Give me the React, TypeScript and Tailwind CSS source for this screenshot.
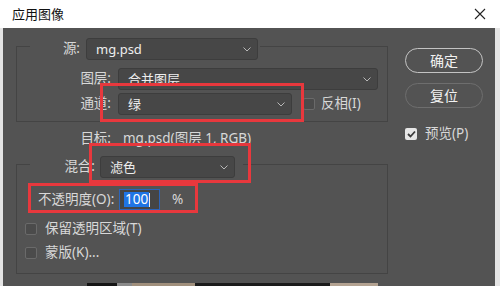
import React from 'react';

const font = "font-['Noto_Sans','Noto_Sans_CJK_SC',sans-serif]";

const Chevron: React.FC = () => (
  <svg width="8" height="5" viewBox="0 0 8 5" className="shrink-0">
    <polyline points="0.5,0.5 4,4 7.5,0.5" fill="none" stroke="#b8b8b8" strokeWidth="1" />
  </svg>
);

// dropdown box, width class passed in full
const Select: React.FC<{ value: string; className: string }> = ({ value, className }) => (
  <div
    className={`flex items-center justify-between h-[22px] pl-[9px] pr-[6px] bg-[#474747] border border-[#3d3d3d] rounded-[3px] text-[13px] leading-none text-[#eeeeee] ${className}`}
  >
    <span>{value}</span>
    <Chevron />
  </div>
);

const Box: React.FC<{ checked?: boolean }> = ({ checked }) =>
  checked ? (
    <div className="w-[12px] h-[12px] rounded-[2px] bg-[#e6e6e6] flex items-center justify-center shrink-0">
      <svg width="9" height="8" viewBox="0 0 9 8">
        <polyline points="1,4 3.5,6.5 8,1.5" fill="none" stroke="#3a3a3a" strokeWidth="1.8" />
      </svg>
    </div>
  ) : (
    <div className="w-[12px] h-[12px] rounded-[2px] bg-[#4b4b4b] border border-[#6a6a6a] shrink-0" />
  );

const App: React.FC = () => {
  return (
    <div className={`relative w-[500px] h-[286px] overflow-hidden bg-[#e4e4e4] ${font}`}>
      {/* title bar */}
      <div className="h-[28px] bg-white flex items-center justify-between pl-[12px] pr-[14px]">
        <span className="text-[13px] leading-none text-[#111]">应用图像</span>
        <svg width="12" height="12" viewBox="0 0 12 12">
          <path d="M1 1 L11 11 M11 1 L1 11" stroke="#222" strokeWidth="1.1" />
        </svg>
      </div>

      {/* dialog body */}
      <div className="flex h-[255px] ml-[3px] mr-[5px] bg-[#535353] text-[13.5px] leading-none text-[#d8d8d8]">
        {/* left column */}
        <div className="flex flex-col ml-[13px] w-[372px] pt-[4px]">
          <fieldset className="border border-[#444444] pb-[6px]">
            <legend className="ml-[13px] pt-[6px] pr-[2px]">
              <div className="flex items-center">
                <span className="w-[50px] text-right">源:</span>
                <Select value="mg.psd" className="ml-[6px] w-[172px]" />
              </div>
            </legend>
            <div className="flex flex-col gap-[3px] pt-[8px]">
              <div className="flex items-center">
                <span className="w-[94px] text-right">图层:</span>
                <Select value="合并图层" className="ml-[7px] w-[260px]" />
              </div>
              <div className="flex items-center">
                <span className="w-[94px] text-right">通道:</span>
                <Select value="绿" className="ml-[7px] w-[174px]" />
                <div className="ml-[11px]">
                  <Box />
                </div>
                <span className="ml-[6px]">反相(I)</span>
              </div>
            </div>
          </fieldset>

          <div className="flex items-center h-[20px] mt-[7px]">
            <span className="w-[95px] text-right">目标:</span>
            <span className="ml-[12px]">mg.psd(图层 1, RGB)</span>
          </div>

          <fieldset className="mt-[1px] border border-[#444444] pb-[11px]">
            <legend className="ml-[13px] pt-[6px] pr-[8px]">
              <div className="flex items-center">
                <span className="w-[65px] text-right">混合:</span>
                <Select value="滤色" className="ml-[5px] w-[135px]" />
              </div>
            </legend>
            <div className="flex flex-col pt-[11px]">
              <div className="flex items-center pl-[21px]">
                <span className="w-[80px]">不透明度(O):</span>
                <div className="ml-[1px] w-[41px] h-[21px] bg-[#454545] border border-[#2d64b8] flex items-center pl-[4px]">
                  <span className="bg-[#1f74e4] text-white text-[13.5px] leading-[15px] px-[1px]">100</span>
                  <span className="w-[1px] h-[14px] bg-[#eeeeee]" />
                </div>
                <span className="ml-[12px]">%</span>
              </div>
              <div className="flex items-center h-[18px] mt-[10px] pl-[8px]">
                <Box />
                <span className="ml-[8px]">保留透明区域(T)</span>
              </div>
              <div className="flex items-center h-[18px] mt-[6px] pl-[8px]">
                <Box />
                <span className="ml-[8px]">蒙版(K)...</span>
              </div>
            </div>
          </fieldset>
        </div>

        {/* right column */}
        <div className="flex flex-col ml-[17px] w-[78px] pt-[20px]">
          <button className="h-[25px] rounded-full border-[1.5px] border-[#c4c4c4] text-[14px] leading-none text-[#f2f2f2]">
            确定
          </button>
          <button className="mt-[10px] h-[25px] rounded-full border-[1.5px] border-[#6e6e6e] text-[14px] leading-none text-[#f2f2f2]">
            复位
          </button>
          <div className="flex items-center mt-[19px]">
            <Box checked />
            <span className="ml-[8px]">预览(P)</span>
          </div>
        </div>
      </div>

      {/* strip of the photo underneath */}
      <div className="flex h-[3px] ml-[3px] mr-[5px]">
        <div className="w-[84px] bg-[#535353]" />
        <div className="w-[30px] bg-[#151515]" />
        <div className="w-[15px] bg-[#8a8a8a]" />
        <div className="w-[63px] bg-[#a08f7c]" />
        <div className="w-[135px] bg-[#1b1b1b]" />
        <div className="w-[48px] bg-[#b3a291]" />
        <div className="flex-1 bg-[#535353]" />
      </div>

      {/* red annotation boxes */}
      <div className="absolute left-[100px] top-[83px] w-[204px] h-[39px] border-[3px] border-[#e8383d]" />
      <div className="absolute left-[89px] top-[143px] w-[162px] h-[40px] border-[3px] border-[#e8383d]" />
      <div className="absolute left-[28px] top-[183px] w-[170px] h-[30px] border-[3px] border-[#e8383d]" />
    </div>
  );
};

export default App;
